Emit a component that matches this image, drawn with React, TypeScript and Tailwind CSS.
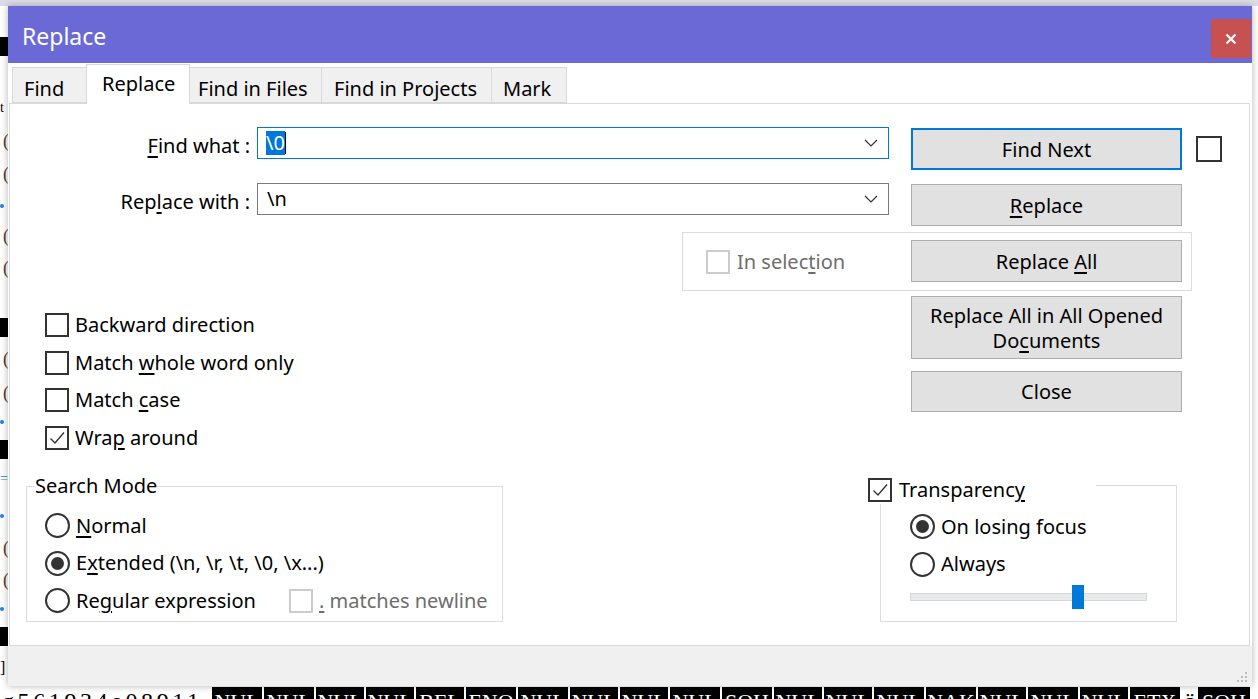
import React from "react";

const FONT = "font-['Noto_Sans',sans-serif]";

function Check() {
  return (
    <svg width="20" height="20" viewBox="0 0 20 20">
      <polyline points="3.5,10.5 8,15 17,4.5" fill="none" stroke="#333" strokeWidth="1.4" />
    </svg>
  );
}

function Box({ checked = false, disabled = false }: { checked?: boolean; disabled?: boolean }) {
  return (
    <span
      className={`w-6 h-6 box-border shrink-0 border-2 bg-white flex items-center justify-center ${
        disabled ? "border-[#cccccc]" : "border-[#333333]"
      }`}
    >
      {checked && <Check />}
    </span>
  );
}

function Radio({ on = false }: { on?: boolean }) {
  return (
    <span className="w-[25px] h-[25px] box-border shrink-0 rounded-full border-2 border-[#333333] bg-white flex items-center justify-center">
      {on && <span className="w-[13px] h-[13px] rounded-full bg-[#333333]" />}
    </span>
  );
}

function Chevron() {
  return (
    <svg width="14" height="8" viewBox="0 0 14 8" className="shrink-0">
      <polyline points="1,1 7,7 13,1" fill="none" stroke="#333" strokeWidth="1.2" />
    </svg>
  );
}

function Btn({
  children,
  focus = false,
  h = "h-[42px]",
}: {
  children: React.ReactNode;
  focus?: boolean;
  h?: string;
}) {
  return (
    <div
      className={`w-[271px] ${h} box-border bg-[#e1e1e1] flex items-center justify-center text-center leading-[25px] ${
        focus ? "border-2 border-[#0078d7]" : "border border-[#adadad]"
      }`}
    >
      {children}
    </div>
  );
}

function CheckRow({ children, checked = false }: { children: React.ReactNode; checked?: boolean }) {
  return (
    <div className="h-[37.5px] flex items-center">
      <Box checked={checked} />
      <span className="ml-[6px]">{children}</span>
    </div>
  );
}

const nulCells = [
  ["NUL", 52], ["NUL", 52], ["NUL", 50], ["NUL", 50], ["BEL", 50], ["ENQ", 52],
  ["NUL", 52], ["NUL", 50], ["NUL", 50], ["NUL", 52], ["SOH", 52], ["NUL", 50],
  ["NUL", 50], ["NUL", 52], ["NAK", 52], ["NUL", 50], ["NUL", 52], ["NUL", 50],
  ["ETX", 52],
] as const;

export default function App() {
  return (
    <div className={`relative w-[1258px] h-[699px] overflow-hidden bg-white ${FONT} text-[20px] text-black`}>
      {/* editor behind the dialog */}
      <div className="absolute inset-0 flex flex-col">
        <div className="h-[6px] bg-[#dcdce9]" />
        <div className="relative flex-1 font-['Liberation_Serif',serif] text-[20px]">
          <span className="absolute left-0 top-[31px] w-[8px] h-[19px] bg-black" />
          <span className="absolute left-0 top-[95px] text-[14px] leading-none">t</span>
          <span className="absolute left-[3px] top-[126px] text-[18px] leading-none text-[#5a3a1a]">(</span>
          <span className="absolute left-[3px] top-[159px] text-[18px] leading-none text-[#5a3a1a]">(</span>
          <span className="absolute left-0 top-[198px] w-[4px] h-[4px] rounded-full bg-[#2a7fd4]" />
          <span className="absolute left-[3px] top-[221px] text-[18px] leading-none text-[#5a3a1a]">(</span>
          <span className="absolute left-[3px] top-[253px] text-[18px] leading-none text-[#5a3a1a]">(</span>
          <span className="absolute left-0 top-[312px] w-[8px] h-[19px] bg-black" />
          <span className="absolute left-[3px] top-[344px] text-[18px] leading-none text-[#5a3a1a]">(</span>
          <span className="absolute left-[3px] top-[378px] text-[18px] leading-none text-[#5a3a1a]">(</span>
          <span className="absolute left-0 top-[414px] w-[4px] h-[4px] rounded-full bg-[#2a7fd4]" />
          <span className="absolute left-0 top-[434px] w-[8px] h-[19px] bg-black" />
          <span className="absolute left-0 top-[466px] text-[14px] leading-none text-[#2a7fd4]">=</span>
          <span className="absolute left-0 top-[508px] w-[4px] h-[4px] rounded-full bg-[#2a7fd4]" />
          <span className="absolute left-[3px] top-[533px] text-[18px] leading-none text-[#5a3a1a]">(</span>
          <span className="absolute left-[3px] top-[565px] text-[18px] leading-none text-[#5a3a1a]">(</span>
          <span className="absolute left-0 top-[601px] w-[4px] h-[4px] rounded-full bg-[#2a7fd4]" />
          <span className="absolute left-0 top-[621px] w-[8px] h-[19px] bg-black" />
          <span className="absolute left-0 top-[654px] text-[16px] leading-none">]</span>
          {/* bottom line of the editor */}
          <div className="absolute left-0 top-[681px] flex items-start h-[30px] text-[24px] leading-[28px]">
            <span className="w-[212px] tracking-[3.6px] pl-[2px]">g561934e08911</span>
            {nulCells.map(([t, w], i) => (
              <span
                key={i}
                style={{ width: w }}
                className="h-[30px] bg-black text-white text-[22px] leading-[30px] border-r-2 border-white box-border flex justify-center"
              >
                {t}
              </span>
            ))}
            <span className="w-[16px] text-center">ö</span>
            <span className="w-[52px] h-[30px] bg-black text-white text-[22px] leading-[30px] flex justify-center">SOH</span>
          </div>
        </div>
      </div>

      {/* dialog window */}
      <div className="absolute left-[8px] top-[6px] w-[1244px] h-[680px] flex flex-col bg-white shadow-[0_0_7px_rgba(0,0,0,0.3)]">
        {/* title bar */}
        <div className="h-[57px] shrink-0 bg-[#6b69d6] flex items-start">
          <span className="ml-[14px] mt-[14px] text-[23px] leading-[32px] text-white">Replace</span>
          <div className="ml-auto mr-[1px] mt-[13px] w-[40px] h-[39px] bg-[#c75050] flex items-center justify-center">
            <svg width="12" height="12" viewBox="0 0 12 12">
              <path d="M1.5 1.5 L10.5 10.5 M10.5 1.5 L1.5 10.5" stroke="white" strokeWidth="2.2" />
            </svg>
          </div>
        </div>

        {/* body */}
        <div className="flex-1 flex flex-col">
          {/* tabs */}
          <div className="relative z-10 ml-[4px] mt-[1px] h-[40px] -mb-[1px] flex items-end">
            <div className="w-[74px] h-[36px] mb-[1px] box-border bg-[#f0f0f0] border border-[#d9d9d9] border-r-0 pl-[11px] leading-[41px]">Find</div>
            <div className="w-[104px] h-[40px] box-border bg-white border border-[#d9d9d9] border-b-0 pl-[15px] leading-[38px]">Replace</div>
            <div className="w-[132px] h-[36px] mb-[1px] box-border bg-[#f0f0f0] border border-[#d9d9d9] border-l-0 pl-[8px] leading-[41px]">Find in Files</div>
            <div className="w-[170px] h-[36px] mb-[1px] box-border bg-[#f0f0f0] border border-[#d9d9d9] border-l-0 pl-[12px] leading-[41px]">Find in Projects</div>
            <div className="w-[75px] h-[36px] mb-[1px] box-border bg-[#f0f0f0] border border-[#d9d9d9] border-l-0 pl-[11px] leading-[41px]">Mark</div>
          </div>

          {/* panel */}
          <div className="ml-[1px] mr-[2px] h-[543px] box-border border border-[#d9d9d9] bg-white flex flex-col">
            {/* top section */}
            <div className="mt-[23px] flex items-start">
              {/* left column */}
              <div className="w-[879px] flex flex-col">
                <div className="flex items-center h-[32px]">
                  <span className="w-[240px] text-right pt-[6px]">
                    <u className="underline-offset-[3px]">F</u>ind what :
                  </span>
                  <div className="ml-[7px] w-[632px] h-[32px] box-border border border-[#0078d7] flex items-center pl-[8px] pr-[10px]">
                    <span className="bg-[#0078d7] text-white leading-[24px]">\0</span>
                    <span className="w-[1px] h-[22px] bg-black" />
                    <span className="ml-auto"><Chevron /></span>
                  </div>
                </div>
                <div className="mt-[24px] flex items-center h-[32px]">
                  <span className="w-[240px] text-right pt-[6px]">
                    Rep<u className="underline-offset-[3px]">l</u>ace with :
                  </span>
                  <div className="ml-[7px] w-[632px] h-[32px] box-border border border-[#7a7a7a] flex items-center pl-[9px] pr-[10px]">
                    <span>\n</span>
                    <span className="ml-auto"><Chevron /></span>
                  </div>
                </div>

                <div className="mt-[91.25px] ml-[35px] flex flex-col">
                  <CheckRow>Backward direction</CheckRow>
                  <CheckRow>
                    Match <u className="underline-offset-[3px]">w</u>hole word only
                  </CheckRow>
                  <CheckRow>
                    Match <u className="underline-offset-[3px]">c</u>ase
                  </CheckRow>
                  <CheckRow checked>
                    Wra<u className="underline-offset-[3px]">p</u> around
                  </CheckRow>
                </div>
              </div>

              {/* right column */}
              <div className="ml-[22px] flex flex-col">
                <div className="mt-[1px] flex items-center">
                  <Btn focus>Find Next</Btn>
                  <span className="ml-[14px] w-[26px] h-[26px] box-border border-2 border-[#333333]" />
                </div>
                <div className="mt-[14px]">
                  <Btn>
                    <span>
                      <u className="underline-offset-[3px]">R</u>eplace
                    </span>
                  </Btn>
                </div>
                <div className="mt-[14px] relative">
                  {/* "In selection" group box behind the button */}
                  <div className="absolute left-[-229px] top-[-8px] w-[510px] h-[59px] box-border border border-[#dcdcdc] flex items-center pl-[23px]">
                    <Box disabled />
                    <span className="ml-[7px] text-[#6d6d6d]">
                      In selec<u className="underline-offset-[3px]">t</u>ion
                    </span>
                  </div>
                  <div className="relative">
                    <Btn>
                      <span>
                        Replace <u className="underline-offset-[3px]">A</u>ll
                      </span>
                    </Btn>
                  </div>
                </div>
                <div className="mt-[14px]">
                  <Btn h="h-[63px]">
                    <span>
                      Replace All in All Opened
                      <br />
                      Do<u className="underline-offset-[3px]">c</u>uments
                    </span>
                  </Btn>
                </div>
                <div className="mt-[12px]">
                  <Btn h="h-[41px]">Close</Btn>
                </div>
              </div>
            </div>

            {/* bottom section */}
            <div className="mt-[17.75px] flex items-start">
              <fieldset className="ml-[16px] w-[477px] h-[148px] box-border border border-[#dcdcdc] p-0 m-0 min-w-0">
                <legend className="ml-[8px] px-0 leading-[24px]">Search Mode</legend>
                <div className="ml-[18px] pt-[9px] flex flex-col">
                  <div className="h-[37.5px] flex items-center">
                    <Radio />
                    <span className="ml-[6px]">
                      <u className="underline-offset-[3px]">N</u>ormal
                    </span>
                  </div>
                  <div className="h-[37.5px] flex items-center">
                    <Radio on />
                    <span className="ml-[6px]">
                      E<u className="underline-offset-[3px]">x</u>tended (\n, \r, \t, \0, \x...)
                    </span>
                  </div>
                  <div className="h-[37.5px] flex items-center">
                    <Radio />
                    <span className="ml-[6px] w-[213px]">
                      Re<u className="underline-offset-[3px]">g</u>ular expression
                    </span>
                    <Box disabled />
                    <span className="ml-[6px] text-[#6d6d6d]">
                      <u className="underline-offset-[3px]">.</u> matches newline
                    </span>
                  </div>
                </div>
              </fieldset>

              <div className="relative ml-[377px] mt-[11px] w-[297px] h-[137px] box-border border border-[#dcdcdc]">
                <div className="absolute left-[-13px] top-[-10px] w-[228px] h-[28px] bg-white flex items-center">
                  <Box checked />
                  <span className="ml-[7px]">
                    Transparenc<u className="underline-offset-[3px]">y</u>
                  </span>
                </div>
                <div className="ml-[29px] mt-[22px] flex flex-col">
                  <div className="h-[37.5px] flex items-center">
                    <Radio on />
                    <span className="ml-[6px]">On losing focus</span>
                  </div>
                  <div className="h-[37.5px] flex items-center">
                    <Radio />
                    <span className="ml-[6px]">Always</span>
                  </div>
                  <div className="relative mt-[10px] w-[237px] h-[8px] box-border bg-[#e7eaea] border border-[#d6d6d6]">
                    <span className="absolute left-[161px] top-[-9px] w-[12px] h-[24px] bg-[#0078d7]" />
                  </div>
                </div>
              </div>
            </div>
          </div>

          {/* footer */}
          <div className="flex-1 bg-[#f0f0f0] flex items-end justify-end pr-[4px] pb-[3px]">
            <svg width="12" height="12" viewBox="0 0 12 12">
              <rect x="9" y="1" width="2" height="2" fill="#bcbcbc" />
              <rect x="5" y="5" width="2" height="2" fill="#bcbcbc" />
              <rect x="9" y="5" width="2" height="2" fill="#bcbcbc" />
              <rect x="1" y="9" width="2" height="2" fill="#bcbcbc" />
              <rect x="5" y="9" width="2" height="2" fill="#bcbcbc" />
              <rect x="9" y="9" width="2" height="2" fill="#bcbcbc" />
            </svg>
          </div>
        </div>
      </div>
    </div>
  );
}
